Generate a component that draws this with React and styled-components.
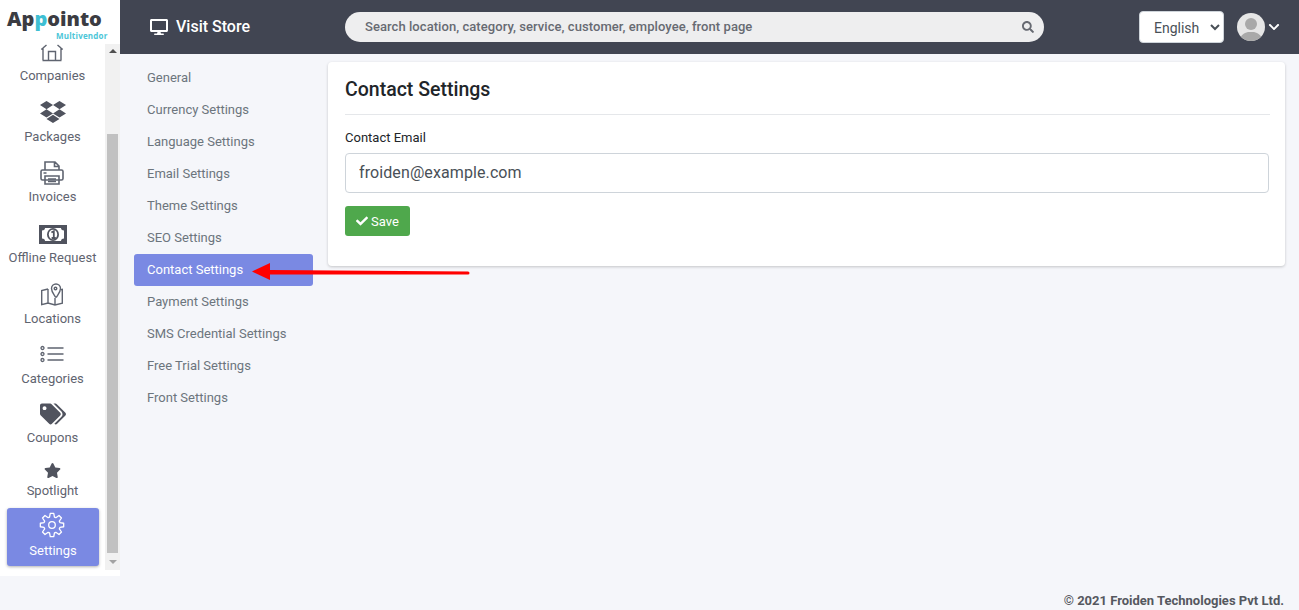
import styled, { createGlobalStyle } from "styled-components";
import { FaDropbox, FaTags, FaStar, FaDesktop, FaSearch, FaCheck, FaChevronDown } from "react-icons/fa";

const Global = createGlobalStyle`
  html, body { margin: 0; padding: 0; height: 100%; }
  body { font-family: Roboto, "Liberation Sans", sans-serif; background: #f5f6fa; overflow: hidden; }
  * { box-sizing: border-box; }
`;

const Page = styled.div`
  display: flex;
  height: 610px;
`;
const Sidebar = styled.aside`
  width: 120px;
  height: 576px;
  background: #fff;
  flex-shrink: 0;
  display: flex;
  flex-direction: column;
`;
const Logo = styled.div`
  height: 44px;
  padding: 5px 0 0 7px;
  position: relative;
`;
const LogoName = styled.div`
  font-family: "Open Sans", sans-serif;
  font-size: 20px;
  line-height: 28px;
  font-weight: 800;
  color: #3b3c42;
`;
const LogoP = styled.span`
  color: #3fbfd3;
`;
const LogoSub = styled.div`
  position: absolute;
  left: 56px;
  top: 31px;
  font-family: "Open Sans", sans-serif;
  font-size: 8px;
  line-height: 9px;
  font-weight: 700;
  letter-spacing: 0.2px;
  color: #4cc6d8;
`;
const NavWrap = styled.div`
  display: flex;
  height: 526px;
`;
const NavList = styled.nav`
  width: 105px;
  overflow: hidden;
`;
const NavItem = styled.a`
  display: flex;
  flex-direction: column;
  align-items: center;
  justify-content: flex-end;
  height: ${(p) => p.$h}px;
  margin: ${(p) => (p.$active ? "2px 6px 0 7px" : "0")};
  padding-bottom: 5px;
  font-size: 13px;
  line-height: 20px;
  border-radius: 3px;
  color: ${(p) => (p.$active ? "#fff" : "#5f6470")};
  background: ${(p) => (p.$active ? "#7a89e3" : "transparent")};
  box-shadow: ${(p) => (p.$active ? "0 1px 3px rgba(0,0,0,.3)" : "none")};
  svg { display: block; margin-bottom: ${(p) => p.$gap}px; overflow: visible; }
`;
const Track = styled.div`
  width: 15px;
  background: #f1f1f1;
  display: flex;
  flex-direction: column;
  align-items: center;
  justify-content: space-between;
  padding: 5px 0 6px;
  position: relative;
`;
const Thumb = styled.div`
  position: absolute;
  left: 2px;
  top: 90px;
  width: 11px;
  height: 419px;
  background: #c1c1c1;
`;
const ArrowUp = styled.div`
  border: 4px solid transparent;
  border-top: 0;
  border-bottom: 4px solid #505050;
  width: 0;
`;
const ArrowDown = styled.div`
  border: 4px solid transparent;
  border-bottom: 0;
  border-top: 4px solid #a3a3a3;
  width: 0;
`;
const Main = styled.div`
  flex: 1;
  display: flex;
  flex-direction: column;
  min-width: 0;
`;
const TopBar = styled.header`
  height: 54px;
  background: #414552;
  display: flex;
  align-items: center;
  padding: 0 19px 0 30px;
`;
const VisitStore = styled.a`
  display: flex;
  align-items: center;
  gap: 8px;
  width: 195px;
  margin-top: -1px;
  color: #fff;
  font-size: 16px;
  font-weight: 500;
`;
const SearchBox = styled.div`
  width: 699px;
  height: 30px;
  border-radius: 15px;
  background: #eeeeef;
  color: #676a72;
  font-size: 13px;
  font-weight: 500;
  letter-spacing: 0.06px;
  display: flex;
  align-items: center;
  justify-content: space-between;
  padding: 0 10px 1px 20px;
`;
const LangSelect = styled.select`
  width: 85px;
  height: 32px;
  margin: 0 0 0 95px;
  border: 1px solid #ced4da;
  border-radius: 4px;
  background: #fff;
  color: #495057;
  font-family: Roboto, sans-serif;
  font-size: 14px;
  padding: 2px 0 0 10px;
`;
const Avatar = styled.svg`
  width: 28px;
  height: 28px;
  margin: 0 3px 0 13px;
  border-radius: 50%;
  background: #e6e6e6;
`;
const Content = styled.div`
  flex: 1;
  display: flex;
  align-items: flex-start;
  padding: 8px 14px 0 14px;
`;
const SettingsMenu = styled.ul`
  list-style: none;
  width: 179px;
  margin: 0 15px 0 0;
  padding: 0;
`;
const MenuItem = styled.li`
  height: 32px;
  line-height: 32px;
  padding-left: 13px;
  font-size: 13px;
  border-radius: 3px;
  color: ${(p) => (p.$active ? "#fff" : "#6c757d")};
  background: ${(p) => (p.$active ? "#7a89e3" : "transparent")};
`;
const Card = styled.section`
  flex: 1;
  height: 204px;
  background: #fff;
  border-radius: 4px;
  box-shadow: 0 1px 3px rgba(0, 0, 0, 0.2);
  padding: 0 15px 0 17px;
`;
const CardTitle = styled.h2`
  margin: 0;
  height: 53px;
  font-size: 19.5px;
  line-height: 55px;
  font-weight: 500;
  color: #212529;
  border-bottom: 1px solid #e5e7ea;
`;
const FieldLabel = styled.label`
  display: block;
  margin-top: 13px;
  font-size: 13px;
  line-height: 20px;
  color: #212529;
`;
const TextInput = styled.input`
  display: block;
  width: 924px;
  height: 40px;
  margin-top: 5px;
  padding: 0 13px 2px;
  border: 1px solid #ced4da;
  border-radius: 4px;
  font-family: Roboto, sans-serif;
  font-size: 16px;
  letter-spacing: 0.1px;
  color: #495057;
`;
const SaveButton = styled.button`
  display: flex;
  align-items: center;
  gap: 3px;
  width: 65px;
  height: 30px;
  margin-top: 13px;
  padding: 0 0 0 11px;
  border: 0;
  border-radius: 3px;
  background: #4fa84c;
  color: #fff;
  font-family: Roboto, sans-serif;
  font-size: 13px;
`;
const Footer = styled.footer`
  height: 22px;
  padding-right: 15px;
  text-align: right;
  font-size: 13px;
  line-height: 26px;
  font-weight: 700;
  color: #55585f;
`;
const ArrowMark = styled.svg`
  position: absolute;
  left: 245px;
  top: 258px;
`;

const CompaniesIcon = () => (
  <svg width="24" height="16" viewBox="0 0 24 16" fill="none" stroke="#5f6470" strokeWidth="1.4">
    <path d="M1.500 15.500h19M2 15V3L.3 4.500M20 15V3L21.700 4.500M2 3 5.500 0M20 3 16.500 0M7.500 15V6.500h7V15" />
  </svg>
);
const InvoiceIcon = () => (
  <svg width="24" height="24" viewBox="0 0 24 24" fill="none" stroke="#5f6470" strokeWidth="1.6">
    <path d="M4 9V1h10l4 4v4M13.500 1v4.500H18" />
    <rect x="0" y="9" width="22" height="10" rx="1.500" />
    <path d="M4 15h14v8H4zM7 18h8M7 20.500h8M2.500 12h3" />
  </svg>
);
const MoneyIcon = () => (
  <svg width="28" height="19" viewBox="0 0 28 19">
    <path fill="#50535e" fillRule="evenodd" d="M0 0h28v19H0zM3 5.500v8c2 0 3 1.200 3 2.500h16c0-1.300 1-2.500 3-2.500v-8c-2 0-3-1.200-3-2.500H6c0 1.300-1 2.500-3 2.500z" />
    <ellipse cx="14" cy="9.500" rx="6" ry="6.500" fill="#50535e" />
    <ellipse cx="14" cy="9.500" rx="4.200" ry="4.800" fill="#fff" />
    <path d="M12.400 7.500 14.800 6.300v6.500M12.600 13h4.200" stroke="#50535e" strokeWidth="1.800" fill="none" />
  </svg>
);
const MapIcon = () => (
  <svg width="24" height="22" viewBox="0 0 24 22" fill="none" stroke="#5f6470" strokeWidth="1.4">
    <path d="M7 5 .7 6.500V20.700L7 19l7 2 7.300-1.700V5.500L20 5.800M7 5v14M14 14v7" />
    <path d="M14 14c-2-3-4-5-4-8.500a4.500 4.500 0 0 1 9 0c0 3.500-2 5.500-4 8.500z" fill="#fff" transform="translate(.5 -1)" />
    <circle cx="14.500" cy="4.500" r="1.300" />
  </svg>
);
const ListIcon = () => (
  <svg width="24" height="16" viewBox="0 0 24 16" fill="none" stroke="#5f6470">
    <circle cx="1.500" cy="2" r="1.500" strokeWidth="1.300" />
    <circle cx="1.500" cy="8" r="1.500" strokeWidth="1.300" />
    <circle cx="1.500" cy="14" r="1.500" strokeWidth="1.300" />
    <path d="M6.500 2h16M6.500 8h16M6.500 14h16" strokeWidth="1.400" />
  </svg>
);
// eight toothed gear, computed so the teeth stay even
const gearPath = () => {
  const pts = [];
  const teeth = 8;
  for (let i = 0; i < teeth; i++) {
    const a = (i * Math.PI * 2) / teeth - Math.PI / 2;
    [[a - 0.3, 8.300], [a - 0.15, 11.800], [a + 0.15, 11.800], [a + 0.3, 8.300]].forEach(([t, r]) =>
      pts.push(`${(11 + r * Math.cos(t)).toFixed(2)} ${(12 + r * Math.sin(t)).toFixed(2)}`)
    );
  }
  return `M${pts.join("L")}Z`;
};
const GearIcon = () => (
  <svg width="24" height="24" viewBox="0 0 24 24" fill="none" stroke="#fff" strokeWidth="1.300" strokeLinejoin="round">
    <path d={gearPath()} />
    <circle cx="11" cy="12" r="3.300" />
  </svg>
);

const navItems = [
  { label: "Companies", h: 47, gap: 5, icon: <CompaniesIcon /> },
  { label: "Packages", h: 61, gap: 2, icon: <FaDropbox size={26} color="#50535e" /> },
  { label: "Invoices", h: 60, gap: 2, icon: <InvoiceIcon /> },
  { label: "Offline Request", h: 61, gap: 4, icon: <MoneyIcon /> },
  { label: "Locations", h: 61, gap: 3, icon: <MapIcon /> },
  { label: "Categories", h: 60, gap: 7, icon: <ListIcon /> },
  { label: "Coupons", h: 59, gap: 1, icon: <FaTags size={26} color="#50535e" /> },
  { label: "Spotlight", h: 53, gap: 2, icon: <FaStar size={17} color="#50535e" /> },
  { label: "Settings", h: 58, gap: 4, icon: <GearIcon />, active: true },
];

const menuItems = [
  "General",
  "Currency Settings",
  "Language Settings",
  "Email Settings",
  "Theme Settings",
  "SEO Settings",
  "Contact Settings",
  "Payment Settings",
  "SMS Credential Settings",
  "Free Trial Settings",
  "Front Settings",
];

export default function App() {
  return (
    <Page>
      <Global />
      <Sidebar>
        <Logo>
          <LogoName>
            Ap<LogoP>p</LogoP>ointo
          </LogoName>
          <LogoSub>Multivendor</LogoSub>
        </Logo>
        <NavWrap>
          <NavList>
            {navItems.map((item) => (
              <NavItem key={item.label} $h={item.h} $gap={item.gap} $active={item.active}>
                {item.icon}
                {item.label}
              </NavItem>
            ))}
          </NavList>
          <Track>
            <ArrowUp />
            <Thumb />
            <ArrowDown />
          </Track>
        </NavWrap>
      </Sidebar>
      <Main>
        <TopBar>
          <VisitStore>
            <FaDesktop size={18} />
            Visit Store
          </VisitStore>
          <SearchBox>
            Search location, category, service, customer, employee, front page
            <FaSearch size={12} />
          </SearchBox>
          <LangSelect defaultValue="English">
            <option>English</option>
          </LangSelect>
          <Avatar viewBox="0 0 28 28">
            <circle cx="14" cy="11" r="6" fill="#a9a9a9" />
            <path d="M3 28c0-6 4-8 8-9h6c4 1 8 3 8 9z" fill="#a9a9a9" />
          </Avatar>
          <FaChevronDown size={12} color="#fff" />
        </TopBar>
        <Content>
          <SettingsMenu>
            {menuItems.map((m) => (
              <MenuItem key={m} $active={m === "Contact Settings"}>
                {m}
              </MenuItem>
            ))}
          </SettingsMenu>
          <Card>
            <CardTitle>Contact Settings</CardTitle>
            <FieldLabel>Contact Email</FieldLabel>
            <TextInput defaultValue="froiden@example.com" />
            <SaveButton>
              <FaCheck size={12} />
              Save
            </SaveButton>
          </Card>
        </Content>
        <Footer>© 2021 Froiden Technologies Pvt Ltd.</Footer>
      </Main>
      <ArrowMark width="230" height="28" viewBox="0 0 230 28">
        <path d="M7 13.500 25 5v7l198 1.500a1.500 1.500 0 0 1 0 3L25 16.500V22z" fill="#f00" />
      </ArrowMark>
    </Page>
  );
}
